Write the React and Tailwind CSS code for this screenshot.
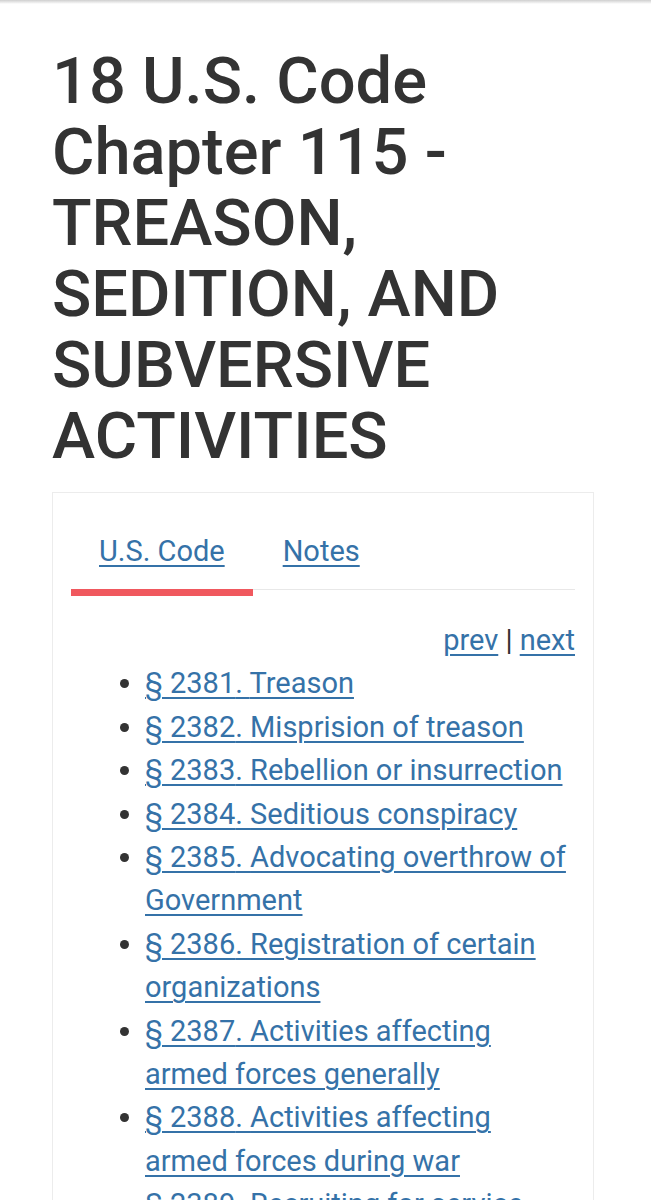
const sections = [
  ['2381', 'Treason'],
  ['2382', 'Misprision of treason'],
  ['2383', 'Rebellion or insurrection'],
  ['2384', 'Seditious conspiracy'],
  ['2385', 'Advocating overthrow of Government'],
  ['2386', 'Registration of certain organizations'],
  ['2387', 'Activities affecting armed forces generally'],
  ['2388', 'Activities affecting armed forces during war'],
  ['2389', 'Recruiting for service against United States'],
  ['2390', 'Enlistment to serve against United States'],
  ['2391', 'Temporary extension of section 2388'],
];

export default function App() {
  return (
    <div className="min-h-screen bg-white text-[#333] font-['Roboto','Liberation_Sans',sans-serif]">
      {/* top edge shadow */}
      <div className="h-[4px] bg-gradient-to-b from-[#cfcfcf] to-white" />

      <div className="pl-[52px] pr-[57px]">
        <h1 className="mt-[42px] mb-[20px] text-[65px] leading-[71px] font-medium">
          18 U.S. Code Chapter 115 - TREASON, SEDITION, AND SUBVERSIVE ACTIVITIES
        </h1>

        <div className="border border-[#ececec] px-[18px] pt-[18px] pb-10">
          {/* tabs */}
          <div className="flex border-b border-[#e8e8e8]">
            <a
              href="#"
              className="-mb-[7px] border-b-[7px] border-[#f0585e] px-[28px] pt-[20px] pb-[18px] text-[29px] leading-[40px] text-[#3572a8] underline underline-offset-[4px] decoration-[1.5px]"
            >
              U.S. Code
            </a>
            <a
              href="#"
              className="px-[30px] pt-[20px] pb-[18px] text-[29px] leading-[40px] text-[#3572a8] underline underline-offset-[4px] decoration-[1.5px]"
            >
              Notes
            </a>
          </div>

          <div className="mt-[29px] text-[29px] leading-[43.4px]">
            <div className="text-right">
              <a href="#" className="text-[#3572a8] underline underline-offset-[4px] decoration-[1.5px]">prev</a>
              <span> | </span>
              <a href="#" className="text-[#3572a8] underline underline-offset-[4px] decoration-[1.5px]">next</a>
            </div>
            <ul className="list-disc pl-[74px] marker:text-[#333]">
              {sections.map(([num, title]) => (
                <li key={num}>
                  <a href="#" className="text-[#3572a8] underline underline-offset-[4px] decoration-[1.5px]">
                    § {num}. {title}
                  </a>
                </li>
              ))}
            </ul>
          </div>
        </div>
      </div>
    </div>
  );
}
